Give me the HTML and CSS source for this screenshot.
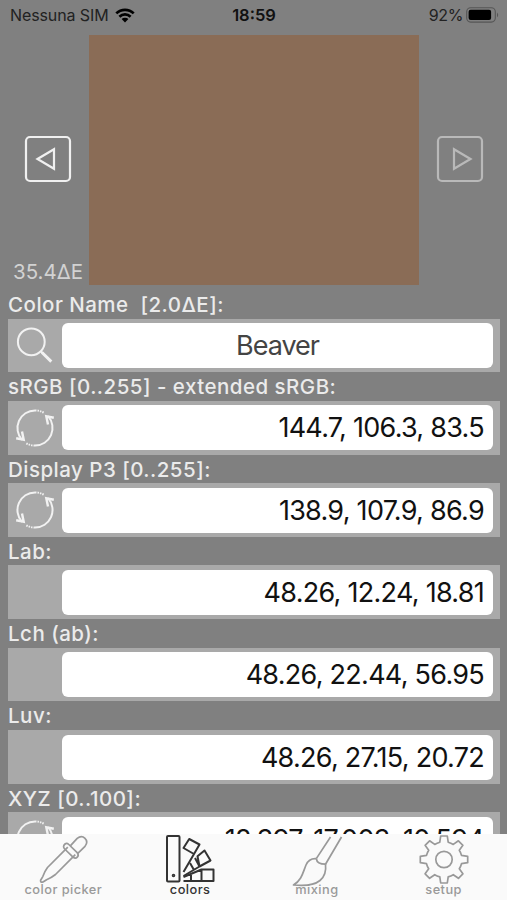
FILE: index.html
```html
<!DOCTYPE html>
<html lang="en">
<head>
    <meta charset="UTF-8">
    <meta name="viewport" content="width=device-width, initial-scale=1.0">
    <title>Colors</title>
    <link rel="stylesheet" href="styles.css">
</head>
<body>
    <svg width="0" height="0" class="defs">
        <symbol id="refresh" viewBox="0 0 40 40" overflow="visible">
            <path d="M20 2.4A17.6 17.6 0 0 0 7 31.8M20 37.6A17.6 17.6 0 0 0 33 8.2"/>
            <path d="M20 2.4A17.6 17.6 0 0 1 29.5 5.2M20 37.6A17.6 17.6 0 0 1 10.5 34.8" stroke-dasharray="1.5 1"/>
            <path d="M33 16.5L31.3 8.3L38.8 9.8M7 23.5L8.7 31.7L1.2 30.2" stroke-width="2.4"/>
        </symbol>
    </svg>
    <div class="phone">
        <header class="status">
            <div class="carrier">
                <span class="sim">Nessuna SIM</span>
                <svg class="wifi" width="20" height="15" viewBox="0 0 20 15">
                    <path d="M1.3 5.4a12.5 12.5 0 0 1 17.4 0M4.4 8.7a8 8 0 0 1 11.2 0" fill="none" stroke="#000" stroke-width="2.7"/>
                    <path d="M6.6 11.1a4.8 4.8 0 0 1 6.8 0L10 14.6z"/>
                </svg>
            </div>
            <span class="time">18:59</span>
            <div class="power">
                <span class="percent">92%</span>
                <svg width="33" height="16" viewBox="0 0 33 16">
                    <rect x=".7" y=".7" width="28.6" height="14.4" rx="4" fill="none" stroke="#555" stroke-width="1.1"/>
                    <rect x="2.6" y="2.7" width="22.5" height="10.4" rx="2"/>
                    <path d="M31 5.5q2.4 2.4 0 4.8z" fill="#555"/>
                </svg>
            </div>
        </header>

        <section class="preview">
            <div class="side">
                <svg class="arrow" width="48" height="48" viewBox="0 0 48 48">
                    <rect x="2" y="2" width="44" height="44" rx="4"/>
                    <path d="M13.5 24L30 14.2V33.8z"/>
                </svg>
                <span class="delta">35.4ΔE</span>
            </div>
            <div class="swatch"></div>
            <div class="side">
                <svg class="arrow off" width="48" height="48" viewBox="0 0 48 48">
                    <rect x="2" y="2" width="44" height="44" rx="4"/>
                    <path d="M34.5 24L18 14.2V33.8z"/>
                </svg>
            </div>
        </section>

        <main class="list">
            <h2 class="label">Color Name&nbsp; [2.0ΔE]:</h2>
            <div class="row">
                <div class="tool">
                    <svg width="38" height="38" viewBox="0 0 38 38">
                        <circle cx="15.3" cy="14.8" r="13.4"/>
                        <path d="M24.8 24.3L27 26.5"/>
                        <path d="M26 25.5L35.3 34.6" stroke-width="3"/>
                    </svg>
                </div>
                <div class="field name"><span>Beaver</span></div>
            </div>
            <h2 class="label">sRGB [0..255] - extended sRGB:</h2>
            <div class="row">
                <div class="tool"><svg width="40" height="40"><use href="#refresh"/></svg></div>
                <div class="field"><span>144.7, 106.3, 83.5</span></div>
            </div>
            <h2 class="label">Display P3 [0..255]:</h2>
            <div class="row">
                <div class="tool"><svg width="40" height="40"><use href="#refresh"/></svg></div>
                <div class="field"><span>138.9, 107.9, 86.9</span></div>
            </div>
            <h2 class="label">Lab:</h2>
            <div class="row">
                <div class="tool"></div>
                <div class="field"><span>48.26, 12.24, 18.81</span></div>
            </div>
            <h2 class="label">Lch (ab):</h2>
            <div class="row">
                <div class="tool"></div>
                <div class="field"><span>48.26, 22.44, 56.95</span></div>
            </div>
            <h2 class="label">Luv:</h2>
            <div class="row">
                <div class="tool"></div>
                <div class="field"><span>48.26, 27.15, 20.72</span></div>
            </div>
            <h2 class="label">XYZ [0..100]:</h2>
            <div class="row">
                <div class="tool"><svg width="40" height="40"><use href="#refresh"/></svg></div>
                <div class="field"><span>18.397, 17.003, 10.594</span></div>
            </div>
        </main>

        <nav class="tabs">
            <a class="tab">
                <svg width="52" height="50" viewBox="0 0 52 50">
                    <path d="M30.8 13.2L10.5 33.5Q7.5 37.5 5.8 42.6L3.6 46.2Q3.2 48.8 6 48L9.6 45.7Q14 44 18.5 40.5L38.3 20.7"/>
                    <path d="M28 10Q25.3 12.4 27.7 15L36 23.2Q38.4 25.2 40.3 23.2T40.2 18.7L31.8 10.5Q29.8 8.5 28 10z"/>
                    <path d="M33.3 11.8L40.2 4.3Q44.5 .8 48 4.3T48 12.3L40.8 19.3"/>
                </svg>
                <span>color picker</span>
            </a>
            <a class="tab active">
                <svg width="52" height="50" viewBox="0 0 52 50">
                    <rect x="3" y="2" width="12.5" height="45.5" rx="1"/>
                    <circle cx="9.5" cy="41.5" r=".8"/>
                    <path d="M25.2 5L35.5 10.5L30 20L19.5 14zM30 20L19.5 38"/>
                    <path d="M33.5 22.3L40.5 16.5L46.5 26.5L35.5 32.5zM31 24L35.5 32.5L19.5 42M26 29L30 36"/>
                    <path d="M37.5 35.5H49.5V47H37.5zM37.5 35.5L19.5 43M37.5 47H19.5M27 40V47"/>
                </svg>
                <span>colors</span>
            </a>
            <a class="tab">
                <svg width="52" height="50" viewBox="0 0 52 50">
                    <path d="M39.5 3L25.3 24.6M50.5 3L34.5 30.2"/>
                    <path d="M25.3 24.6Q26 30.2 34.5 30.2"/>
                    <path d="M25.3 24.6Q18 24 15 31C12 38 11 46 2.5 51Q21 53 29 46.5Q35.8 41 34.5 30.2"/>
                </svg>
                <span>mixing</span>
            </a>
            <a class="tab">
                <svg width="52" height="50" viewBox="0 0 52 50">
                    <circle cx="26" cy="25.5" r="8.2"/>
                    <path d="M22.7 2H29.3L30.2 8.2Q33 9 35.3 10.4L40.4 6.8L44.9 11.3L41.3 16.3Q42.8 18.7 43.5 21.4L49.7 22.4V28.7L43.5 29.7Q42.8 32.4 41.3 34.7L44.9 39.8L40.4 44.3L35.3 40.7Q33 42.1 30.2 42.9L29.3 49H22.7L21.8 42.9Q19 42.1 16.7 40.7L11.6 44.3L7.1 39.8L10.7 34.7Q9.2 32.4 8.5 29.7L2.3 28.7V22.4L8.5 21.4Q9.2 18.7 10.7 16.3L7.1 11.3L11.6 6.8L16.7 10.4Q19 9 21.8 8.2z"/>
                </svg>
                <span>setup</span>
            </a>
        </nav>
    </div>
</body>
</html>
```
FILE: styles.css
```css
*{
    box-sizing: border-box;
}
body{
    margin: 0;
    font-family: Inter, "Liberation Sans", sans-serif;
    background: #808080;
}
.defs{
    display: block;
}
.phone{
    display: flex;
    flex-direction: column;
    height: 900px;
    overflow: hidden;
}
.status{
    display: grid;
    grid-template-columns: 1fr auto 1fr;
    flex: none;
    height: 35px;
    padding: 0 8px 5px 10px;
    align-items: center;
    font-size: 16px;
    color: #222;
}
.carrier, .power{
    display: flex;
    align-items: center;
}
.carrier{
    gap: 6px;
}
.sim{
    letter-spacing: -.1px;
}
.power{
    justify-content: flex-end;
    gap: 3px;
}
.percent{
    letter-spacing: -.4px;
}
.time{
    padding-right: 1px;
    font-size: 16.5px;
    font-weight: 600;
    color: #111;
}
.preview{
    display: grid;
    grid-template-columns: 89px 330px 88px;
    flex: none;
    height: 250px;
}
.swatch{
    background: #8a6c56;
}
.side{
    display: flex;
    flex-direction: column;
    align-items: center;
    padding-top: 100px;
    padding-left: 7px;
}
.side:last-child{
    padding-left: 0;
    padding-right: 6px;
}
.arrow{
    fill: none;
    stroke: #f0f0f0;
    stroke-width: 2.2;
}
.arrow.off{
    stroke: #b9b9b9;
}
.delta{
    margin-top: auto;
    font-size: 20.5px;
    line-height: 26px;
    white-space: nowrap;
    color: #d2d2d2;
}
.list{
    flex: 1;
    min-height: 0;
    overflow: hidden;
    padding: 5px 7px 0 8px;
}
.label{
    margin: 0;
    height: 28.6px;
    line-height: 30px;
    font-size: 20.5px;
    font-weight: 500;
    letter-spacing: .48px;
    white-space: pre;
    color: #ebebeb;
}
.row{
    display: flex;
    height: 53.7px;
    padding: 4.5px 7px 4.2px 0;
    background: #a9a9a9;
}
.tool{
    display: flex;
    width: 54px;
    padding-right: 1px;
    align-items: center;
    justify-content: center;
    fill: none;
    stroke: #f2f2f2;
    stroke-width: 2;
}
.tool svg{
    overflow: visible;
}
.field{
    flex: 1;
    padding-right: 9px;
    border-radius: 6px;
    background: #fff;
    font-size: 27px;
    letter-spacing: -.72px;
    line-height: 45px;
    text-align: right;
    color: #111;
}
.field.name{
    padding: 0;
    text-align: center;
    letter-spacing: -1px;
    color: #444;
}
.tabs{
    display: grid;
    grid-template-columns: repeat(4, 1fr);
    flex: none;
    height: 66px;
    background: #fafafa;
    color: #999;
}
.tab{
    display: flex;
    flex-direction: column;
    align-items: center;
    font-size: 12.8px;
    font-weight: 500;
    letter-spacing: .45px;
    line-height: 12px;
}
.tab svg{
    flex: none;
    overflow: visible;
    fill: none;
    stroke: #999;
    stroke-width: 1.7;
    stroke-linejoin: round;
}
.tab.active{
    color: #333;
}
.tab.active svg{
    stroke: #333;
    stroke-width: 2;
}
```
